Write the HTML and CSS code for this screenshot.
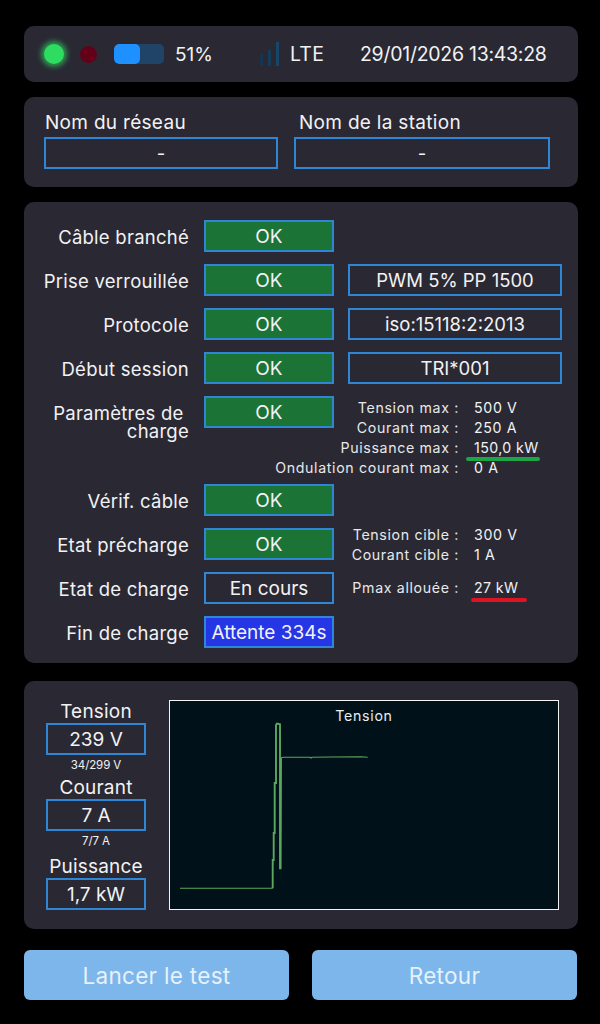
FILE: index.html
```html
<!DOCTYPE html>
<html lang="fr">
<head>
<meta charset="utf-8">
<title>Test</title>
<link rel="stylesheet" href="styles.css">
</head>
<body>
<main class="page">
  <section class="card status">
    <span class="led led-green"></span>
    <span class="led led-red"></span>
    <span class="battery"><span class="battery-fill" style="width:52%"></span></span>
    <span class="pct">51%</span>
    <svg class="signal" width="26" height="24" viewBox="0 0 26 24" aria-hidden="true">
      <rect x="0" y="19" width="3" height="5" fill="#1c2c40"/>
      <rect x="7" y="12" width="3" height="12" fill="#15354f"/>
      <rect x="15" y="8" width="3" height="16" fill="#143d5a"/>
      <rect x="23" y="0" width="3" height="24" fill="#164768"/>
    </svg>
    <span class="lte">LTE</span>
    <span class="clock">29/01/2026 13:43:28</span>
  </section>

  <section class="card names">
    <div class="name-field name-a">
      <div class="name-label">Nom du réseau</div>
      <div class="box name-box">-</div>
    </div>
    <div class="name-field name-b">
      <div class="name-label">Nom de la station</div>
      <div class="box name-box">-</div>
    </div>
  </section>

  <section class="card steps">
    <div class="row">
      <div class="row-label">Câble branché</div>
      <div class="box state ok">OK</div>
    </div>
    <div class="row">
      <div class="row-label">Prise verrouillée</div>
      <div class="box state ok">OK</div>
      <div class="box detail">PWM 5% PP 1500</div>
    </div>
    <div class="row">
      <div class="row-label">Protocole</div>
      <div class="box state ok">OK</div>
      <div class="box detail">iso:15118:2:2013</div>
    </div>
    <div class="row">
      <div class="row-label">Début session</div>
      <div class="box state ok">OK</div>
      <div class="box detail">TRI*001</div>
    </div>
    <div class="row row-tall">
      <div class="row-label label-wrap">Paramètres de&nbsp;<br>charge</div>
      <div class="box state ok">OK</div>
      <div class="info info-top">
        <span class="k">Tension max :</span><span>500 V</span>
        <span class="k">Courant max :</span><span>250 A</span>
        <span class="k">Puissance max :</span><span class="mark mark-green">150,0 kW</span>
        <span class="k">Ondulation courant max :</span><span>0 A</span>
      </div>
    </div>
    <div class="row">
      <div class="row-label">Vérif. câble</div>
      <div class="box state ok">OK</div>
    </div>
    <div class="row">
      <div class="row-label">Etat précharge</div>
      <div class="box state ok">OK</div>
      <div class="info info-mid">
        <span class="k">Tension cible :</span><span>300 V</span>
        <span class="k">Courant cible :</span><span>1 A</span>
      </div>
    </div>
    <div class="row">
      <div class="row-label">Etat de charge</div>
      <div class="box state">En cours</div>
      <div class="info">
        <span class="k">Pmax allouée :</span><span class="mark mark-red">27 kW</span>
      </div>
    </div>
    <div class="row">
      <div class="row-label">Fin de charge</div>
      <div class="box state wait">Attente 334s</div>
    </div>
  </section>

  <section class="card measures">
    <div class="gauges">
      <div class="g-label">Tension</div>
      <div class="box g-box">239 V</div>
      <div class="g-sub">34/299 V</div>
      <div class="g-label">Courant</div>
      <div class="box g-box">7 A</div>
      <div class="g-sub">7/7 A</div>
      <div class="g-label g-label-last">Puissance</div>
      <div class="box g-box">1,7 kW</div>
    </div>
    <div class="chart">
      <div class="chart-title">Tension</div>
      <svg class="chart-svg" width="388" height="208" viewBox="1 1 388 208" aria-hidden="true">
        <polyline class="trace" points="11,188.3 103.7,188.3"/>
        <polyline class="trace trace-thick" points="103.7,188.3 103.7,160 104.7,160 104.7,133 105.7,133 105.7,83 107,83 107,25 108,23.5 111,24.3 111,168.3 111.6,168.3 112,58"/>
        <polyline class="trace" points="112,58 114,57.3 141,57.3 142,58 143,57.3 162,57 192,56.7 198.7,57.3"/>
      </svg>
    </div>
  </section>

  <div class="actions">
    <button class="action" type="button">Lancer le test</button>
    <button class="action" type="button">Retour</button>
  </div>
</main>
</body>
</html>
```

FILE: styles.css
```css
* { box-sizing: border-box; }

html, body {
  margin: 0;
  height: 1024px;
  background: #000;
  overflow: hidden;
}

body {
  color: #f2f2f4;
  font-family: Inter, "Noto Sans", "Liberation Sans", sans-serif;
  font-size: 18.5px;
}

.page {
  padding: 26px 22px 0 24px;
}

.card {
  background: #2a2933;
  border-radius: 10px;
}

.box {
  border: 2px solid #2d86d6;
  display: flex;
  align-items: center;
  justify-content: center;
  height: 32px;
  padding-top: 1px;
  font-size: 18.5px;
  line-height: 1;
  white-space: nowrap;
}

/* status bar */
.status {
  height: 56px;
  display: flex;
  align-items: center;
  padding-left: 20px;
  font-size: 19.5px;
}

.led {
  border-radius: 50%;
  flex: none;
}

.led-green {
  width: 20px;
  height: 20px;
  background: #2fdc62;
  box-shadow: 0 0 5px 3px #2fdc6299;
}

.led-red {
  width: 17px;
  height: 17px;
  margin-left: 16px;
  background: #640018;
  filter: blur(.7px);
}

.battery {
  width: 50px;
  height: 20px;
  margin-left: 17px;
  border-radius: 5px;
  background: #1f4468;
  display: block;
  overflow: hidden;
}

.battery-fill {
  display: block;
  height: 100%;
  background: #1e90ff;
  border-radius: 5px;
}

.pct { margin-left: 11px; width: 42px; font-size: 19px; }
.signal { margin-left: 36px; flex: none; }
.lte { margin-left: 11px; width: 70px; letter-spacing: .2px; }
.clock { white-space: nowrap; letter-spacing: -.27px; }

/* names */
.names {
  margin-top: 15px;
  height: 90px;
  padding: 15px 0 0 20px;
  display: flex;
  gap: 16px;
}

.name-a { width: 234px; }
.name-b { width: 256px; }

.name-label {
  height: 25px;
  padding-left: 1px;
  line-height: 22px;
  font-size: 19px;
  letter-spacing: .3px;
  white-space: nowrap;
}

.name-b .name-label { padding-left: 5px; }

/* steps */
.steps {
  margin-top: 15px;
  height: 461px;
  padding-top: 18px;
  display: flex;
  flex-direction: column;
  gap: 12px;
}

.row {
  display: grid;
  grid-template-columns: 166px 130px 214px;
  grid-template-rows: 32px;
  column-gap: 14px;
  height: 32px;
  align-items: center;
}

.row-tall {
  height: 76px;
  grid-template-rows: 76px;
  align-items: start;
}

.row-label {
  text-align: right;
  white-space: nowrap;
  line-height: 18px;
  padding-right: 1px;
  padding-top: 2px;
  letter-spacing: .25px;
}

.label-wrap {
  padding-top: 0;
  margin-top: 8px;
}

.state { font-size: 19px; }
.state.ok { background: #1b7336; }
.state.wait { background: #2536e6; }

.info {
  display: grid;
  grid-template-columns: 125px auto;
  justify-content: start;
  column-gap: 15px;
  font-size: 14.2px;
  letter-spacing: .65px;
  line-height: 20px;
  margin-left: -14px;
}

.info-top { margin-top: 2px; }
.info-mid { margin-top: 1px; }
.k { justify-self: end; white-space: nowrap; color: #e8e8ea; }

.mark { position: relative; justify-self: start; white-space: nowrap; letter-spacing: .4px; }

.mark::after {
  content: "";
  position: absolute;
  height: 4px;
  border-radius: 2px;
  bottom: -3px;
}

.mark-green::after { left: -8px; width: 74px; background: #1ea548; }
.mark-red::after { left: -3px; width: 56px; background: #dc1423; bottom: -4px; }

/* measures */
.measures {
  margin-top: 18px;
  height: 248px;
  padding: 19px 0 0 22px;
  display: flex;
}

.gauges {
  width: 100px;
  text-align: center;
  flex: none;
}

.g-label { height: 23px; line-height: 24px; font-size: 19px; letter-spacing: .2px; white-space: nowrap; }
.g-label-last { margin-top: 3px; }
.g-box { height: 32px; font-size: 19px; }
.g-sub { font-size: 11.5px; height: 21px; line-height: 20px; letter-spacing: -.1px; }

.chart {
  margin-left: 23px;
  width: 390px;
  height: 210px;
  border: 1px solid #f4f4f4;
  background: #00111a;
  position: relative;
}

.chart-title {
  position: absolute;
  top: 7px;
  left: 0;
  right: 0;
  text-align: center;
  font-size: 14.2px;
  letter-spacing: .7px;
  line-height: 16px;
  color: #e8eef2;
}

.chart-svg { display: block; }
.trace { fill: none; stroke: #5aa85c; stroke-width: 1.1; }
.trace-thick { stroke-width: 1.9; }

/* actions */
.actions {
  margin-top: 21px;
  display: flex;
  gap: 23px;
}

.action {
  width: 265px;
  height: 50px;
  border: 0;
  border-radius: 6px;
  background: #7db6ea;
  color: #e6f1fb;
  font: 22.5px Inter, "Noto Sans", sans-serif;
  letter-spacing: .3px;
}
```
